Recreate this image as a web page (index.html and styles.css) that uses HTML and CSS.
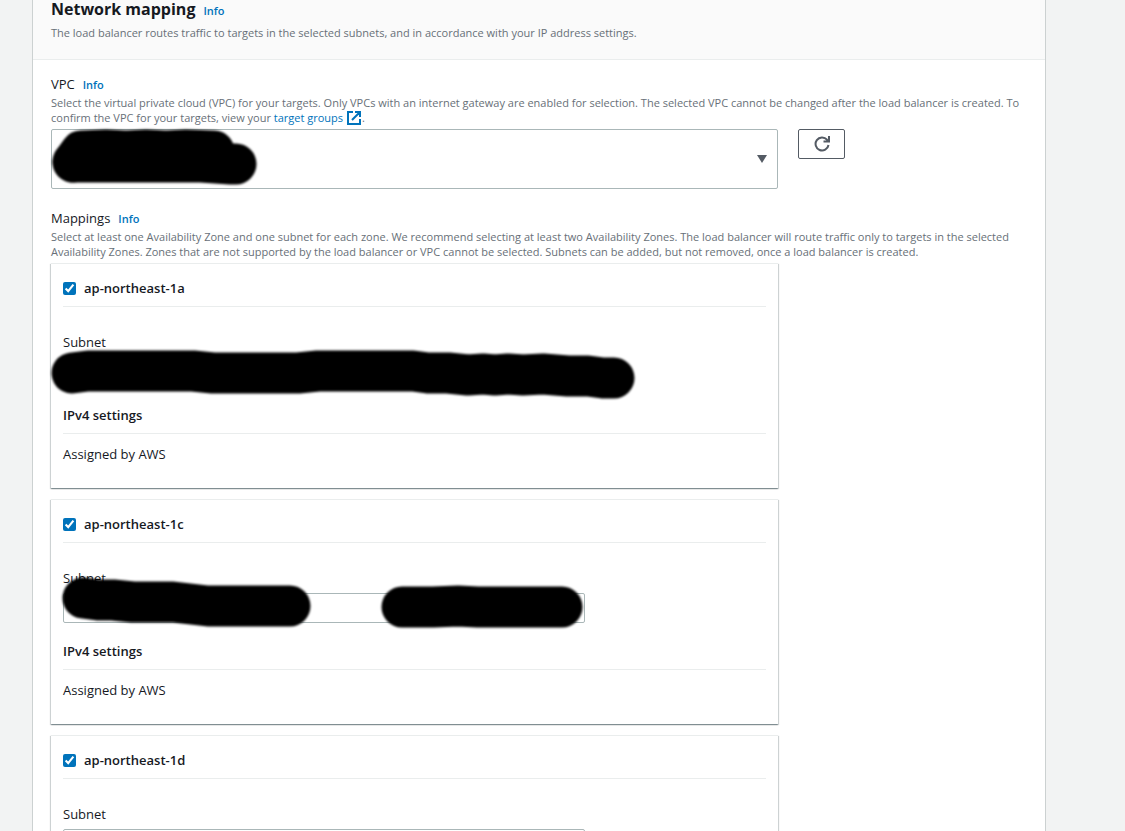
FILE: index.html
```html
<!DOCTYPE html>
<html lang="en">
<head>
  <meta charset="UTF-8" />
  <meta name="viewport" content="width=device-width, initial-scale=1.0" />
  <title>Network mapping</title>
  <link rel="stylesheet" href="styles.css">
</head>
<body>

  <main class="panel">
    <header class="panel-header">
      <div class="title-row">
        <h2>Network mapping</h2>
        <a class="info" href="#">Info</a>
      </div>
      <p class="description">The load balancer routes traffic to targets in the selected subnets, and in accordance with your IP address settings.</p>
    </header>

    <div class="panel-body">
      <section class="field">
        <div class="label-row">
          <label for="vpc">VPC</label>
          <a class="info" href="#">Info</a>
        </div>
        <p class="hint">Select the virtual private cloud (VPC) for your targets. Only VPCs with an internet gateway are enabled for selection. The selected VPC cannot be changed after the load balancer is created. To confirm the VPC for your targets, view your <a href="#">target groups
          <svg class="external" viewBox="0 0 14 14" aria-hidden="true"><path d="M6 1H1v12h12V8M8 1h5v5M13 1L5 9" /></svg></a>.</p>
        <div class="grid">
          <div class="select-wrap wide">
            <select id="vpc" class="select-tall"><option></option></select>
            <svg class="arrow" viewBox="0 0 10 8" aria-hidden="true"><path d="M0 0h10L5 8z" /></svg>
            <svg class="redact" width="220" height="64" viewBox="0 0 220 64" aria-hidden="true">
              <path d="M22 33L30 22L55 21L75 22L95 21L115 22L135 21L163 22" /><path d="M22 33H150L180 35H185" />
            </svg>
          </div>
          <button class="refresh" type="button" aria-label="Refresh">
            <svg viewBox="0 0 16 16" aria-hidden="true"><path d="M14.500 9A6.500 6.500 0 1 1 13 3.700L14.500 5M15 0v5.500H9.500" /></svg>
          </button>
        </div>
      </section>

      <section class="field">
        <div class="label-row">
          <span>Mappings</span>
          <a class="info" href="#">Info</a>
        </div>
        <p class="hint">Select at least one Availability Zone and one subnet for each zone. We recommend selecting at least two Availability Zones. The load balancer will route traffic only to targets in the selected Availability Zones. Zones that are not supported by the load balancer or VPC cannot be selected. Subnets can be added, but not removed, once a load balancer is created.</p>
        <div class="grid">
          <div class="zones wide">
            <div class="zone">
              <label class="zone-name"><input type="checkbox" checked>ap-northeast-1a</label>
              <label class="subnet-label" for="subnet-a">Subnet</label>
              <div class="grid">
                <div class="select-wrap wide">
                  <select id="subnet-a" class="covered"><option></option></select>
                  <svg class="redact" width="600" height="64" viewBox="0 0 600 64" aria-hidden="true">
                    <path d="M9 16L25 14H130L150 16H235L255 14H350L365 16H385L405 18L420 17L432 18L445 17L460 18L480 17L505 19H525L540 21H551" />
                  </svg>
                </div>
              </div>
              <h3>IPv4 settings</h3>
              <p class="assigned">Assigned by AWS</p>
            </div>

            <div class="zone">
              <label class="zone-name"><input type="checkbox" checked>ap-northeast-1c</label>
              <label class="subnet-label" for="subnet-c">Subnet</label>
              <div class="grid">
                <div class="select-wrap wide">
                  <select id="subnet-c"><option></option></select>
                  <svg class="redact" width="600" height="64" viewBox="0 0 600 64" aria-hidden="true">
                    <path d="M20 5L35 7H50L70 9H110L145 13H227M339 14H370L395 13L415 14H470L499 14" />
                  </svg>
                </div>
              </div>
              <h3>IPv4 settings</h3>
              <p class="assigned">Assigned by AWS</p>
            </div>

            <div class="zone">
              <label class="zone-name"><input type="checkbox" checked>ap-northeast-1d</label>
              <label class="subnet-label" for="subnet-d">Subnet</label>
              <div class="grid">
                <div class="select-wrap wide">
                  <select id="subnet-d"><option></option></select>
                </div>
              </div>
            </div>
          </div>
        </div>
      </section>
    </div>
  </main>

</body>
</html>
```
FILE: styles.css
```css
* {
  box-sizing: border-box;
}
body {
  margin: 0;
  padding: 0 79px 0 32px;
  height: 100vh;
  overflow: hidden;
  background-color: #f2f3f3;
  color: #16191f;
  font-family: "Open Sans", "Noto Sans", sans-serif;
  font-size: 13px;
  line-height: 18px;
}
h2, h3, p {
  margin: 0;
}
a {
  color: #0073bb;
  text-decoration: none;
}
.panel {
  min-height: 100vh;
  background-color: #fff;
  border: solid #ccd1d1;
  border-width: 0 1px;
}
.panel-header {
  padding: 0 18px 19px;
  background-color: #fafafa;
  border-bottom: 1px solid #eaeded;
}
.title-row,
.label-row {
  display: flex;
  align-items: baseline;
  gap: 8px;
}
h2 {
  font-size: 16px;
  line-height: 18px;
}
.info {
  font-size: 11px;
  font-weight: 600;
}
.description,
.hint {
  font-size: 11px;
  line-height: 15px;
  color: #687078;
}
.description {
  padding-top: 5px;
}
.panel-body {
  padding: 15px 18px;
}
.hint {
  padding-top: 1px;
}
.field {
  margin-bottom: 20px;
}
.external {
  width: 14px;
  height: 14px;
  margin: 0 1px;
  vertical-align: -3px;
  fill: none;
  stroke: #0073bb;
  stroke-width: 2;
}
.grid {
  display: grid;
  grid-template-columns: repeat(12, 1fr);
  column-gap: 20px;
}
.wide {
  grid-column: span 9;
}
.hint + .grid {
  margin-top: 4px;
}
.select-wrap {
  position: relative;
}
select {
  display: block;
  width: 100%;
  height: 30px;
  appearance: none;
  background-color: #fff;
  border: 1px solid #aab7b8;
  border-radius: 2px;
}
.select-tall {
  height: 60px;
}
.covered {
  border-color: transparent;
}
.arrow {
  position: absolute;
  top: 26px;
  right: 11px;
  width: 10px;
  height: 8px;
  fill: #545b64;
}
.redact {
  position: absolute;
  top: 0;
  left: 0;
  overflow: visible;
  fill: none;
  stroke: #000;
  stroke-width: 41;
  stroke-linecap: round;
  stroke-linejoin: round;
  filter: blur(0.8px);
  pointer-events: none;
}
.refresh {
  grid-column: span 3;
  justify-self: start;
  display: flex;
  align-items: center;
  justify-content: center;
  width: 47px;
  height: 30px;
  padding: 0;
  background-color: #fff;
  border: 1px solid #545b64;
  border-radius: 2px;
}
.refresh svg {
  width: 16px;
  height: 16px;
  fill: none;
  stroke: #545b64;
  stroke-width: 2;
}
.zones {
  display: grid;
  gap: 11px;
}
.zone {
  padding: 15px 12px 25px;
  border-top: 1px solid #eaeded;
  box-shadow: 0 1px 1px 0 rgba(0, 28, 36, 0.3), 1px 1px 1px 0 rgba(0, 28, 36, 0.15), -1px 1px 1px 0 rgba(0, 28, 36, 0.15);
}
.zone-name {
  display: flex;
  align-items: center;
  gap: 8px;
  padding-bottom: 9px;
  border-bottom: 1px solid #eaeded;
  font-weight: 600;
}
.zone-name input {
  width: 13px;
  height: 13px;
  margin: 0;
  accent-color: #0073bb;
}
.subnet-label {
  display: block;
  padding-top: 26px;
  margin-bottom: 6px;
}
h3 {
  margin-top: 19px;
  padding-bottom: 9px;
  border-bottom: 1px solid #eaeded;
  font-size: 13px;
  font-weight: 600;
}
.assigned {
  padding-top: 11px;
}
```
